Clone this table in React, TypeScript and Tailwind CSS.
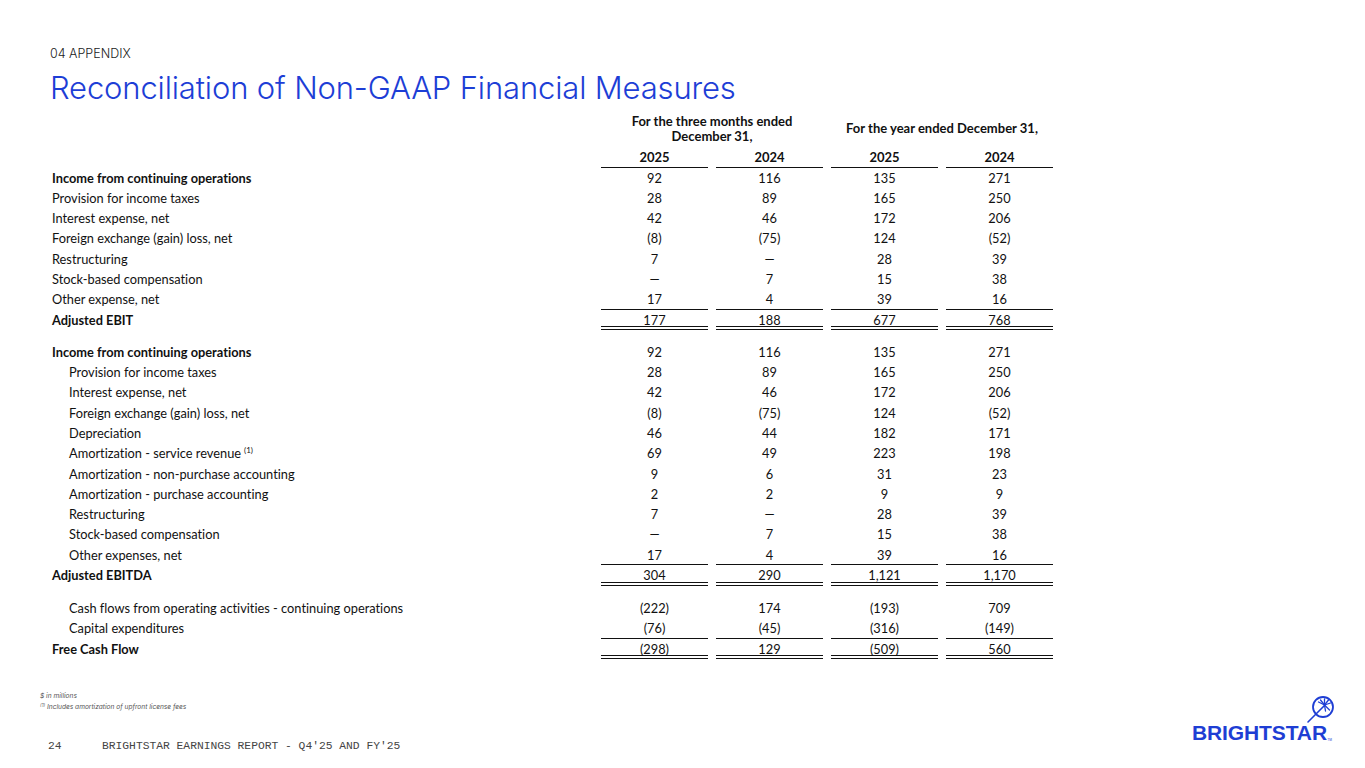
import React from 'react';

type Row = {
  label: string;
  values: string[];
  bold?: boolean;
  indent?: boolean;
  line?: 'single' | 'double';
  note?: string;
};

const section1: Row[] = [
  { label: 'Income from continuing operations', values: ['92', '116', '135', '271'], bold: true },
  { label: 'Provision for income taxes', values: ['28', '89', '165', '250'] },
  { label: 'Interest expense, net', values: ['42', '46', '172', '206'] },
  { label: 'Foreign exchange (gain) loss, net', values: ['(8)', '(75)', '124', '(52)'] },
  { label: 'Restructuring', values: ['7', '—', '28', '39'] },
  { label: 'Stock-based compensation', values: ['—', '7', '15', '38'] },
  { label: 'Other expense, net', values: ['17', '4', '39', '16'], line: 'single' },
  { label: 'Adjusted EBIT', values: ['177', '188', '677', '768'], bold: true, line: 'double' },
];

const section2: Row[] = [
  { label: 'Income from continuing operations', values: ['92', '116', '135', '271'], bold: true },
  { label: 'Provision for income taxes', values: ['28', '89', '165', '250'], indent: true },
  { label: 'Interest expense, net', values: ['42', '46', '172', '206'], indent: true },
  { label: 'Foreign exchange (gain) loss, net', values: ['(8)', '(75)', '124', '(52)'], indent: true },
  { label: 'Depreciation', values: ['46', '44', '182', '171'], indent: true },
  { label: 'Amortization - service revenue', values: ['69', '49', '223', '198'], indent: true, note: '(1)' },
  { label: 'Amortization - non-purchase accounting', values: ['9', '6', '31', '23'], indent: true },
  { label: 'Amortization - purchase accounting', values: ['2', '2', '9', '9'], indent: true },
  { label: 'Restructuring', values: ['7', '—', '28', '39'], indent: true },
  { label: 'Stock-based compensation', values: ['—', '7', '15', '38'], indent: true },
  { label: 'Other expenses, net', values: ['17', '4', '39', '16'], indent: true, line: 'single' },
  { label: 'Adjusted EBITDA', values: ['304', '290', '1,121', '1,170'], bold: true, line: 'double' },
];

const section3: Row[] = [
  { label: 'Cash flows from operating activities - continuing operations', values: ['(222)', '174', '(193)', '709'], indent: true },
  { label: 'Capital expenditures', values: ['(76)', '(45)', '(316)', '(149)'], indent: true, line: 'single' },
  { label: 'Free Cash Flow', values: ['(298)', '129', '(509)', '560'], bold: true, line: 'double' },
];

const gridCols = 'grid grid-cols-[541px_107px_107px_107px_107px] gap-x-[8px]';

// rules drawn as inset shadows so they don't push the numbers off-centre
const singleRule = 'shadow-[inset_0_-1px_0_#111]';
const doubleRule = 'shadow-[inset_0_-1px_0_#111,inset_0_-3px_0_#fff,inset_0_-4px_0_#111]';

function TableRow({ row }: { row: Row }) {
  const lineClass = row.line === 'single' ? singleRule : row.line === 'double' ? doubleRule : '';
  return (
    <div className={`${gridCols} h-[20.3px]`}>
      <div className={`flex items-center ${row.indent ? 'pl-[17px]' : ''} ${row.bold ? 'font-bold' : ''}`}>
        {row.label}
        {row.note && <sup className="ml-[3px] text-[8px] top-[-4px]">{row.note}</sup>}
      </div>
      {row.values.map((v, i) => (
        <div key={i} className={`flex items-center justify-center ${lineClass}`}>
          {v}
        </div>
      ))}
    </div>
  );
}

function Logo() {
  return (
    <div className="relative pr-[7px] mb-[10px]">
      <div className="font-['Liberation_Sans',sans-serif] font-bold text-[21px] leading-none tracking-[-0.1px] text-[#1e3ed4]">
        BRIGHTSTAR
      </div>
      <span className="absolute right-[2px] bottom-[1px] text-[3px] leading-none text-[#1e3ed4]">TM</span>
      <svg className="absolute right-[-1px] top-[-27px]" width="36" height="34" viewBox="0 0 36 34" fill="none">
        <circle cx="24" cy="12" r="10" stroke="#1e3ed4" strokeWidth="1.8" />
        <line x1="9" y1="27" x2="25" y2="11" stroke="#1e3ed4" strokeWidth="1.6" strokeLinecap="round" />
        <g stroke="#1e3ed4" strokeWidth="1.3" strokeLinecap="round">
          <line x1="25.5" y1="10" x2="25.5" y2="4" />
          <line x1="25.5" y1="10" x2="31.5" y2="8" />
          <line x1="25.5" y1="10" x2="30.5" y2="15" />
          <line x1="25.5" y1="10" x2="19.5" y2="7" />
          <line x1="25.5" y1="10" x2="29.5" y2="5" />
          <line x1="25.5" y1="10" x2="26.5" y2="16" />
          <line x1="25.5" y1="10" x2="21.5" y2="5" />
        </g>
      </svg>
    </div>
  );
}

export default function App() {
  return (
    <div className="w-[1365px] h-[768px] bg-white relative overflow-hidden flex flex-col">
      {/* Heading */}
      <div className="pl-[50px] pt-[46px] font-['Inter',sans-serif]">
        <div className="text-[12.5px] font-light text-[#222] leading-[16px]">04 APPENDIX</div>
        <h1 className="mt-[8px] text-[31px] font-light text-[#1d3ed6] leading-[36px] tracking-[-0.15px]">
          Reconciliation of Non-GAAP Financial Measures
        </h1>
      </div>

      {/* Table */}
      <div className="pl-[52px] mt-[5px] font-['Lato',sans-serif] text-[12.8px] text-[#111] [font-variant-ligatures:none]">
        <div className={`${gridCols} h-[36px] font-bold text-[13px]`}>
          <div />
          <div className="col-span-2 flex items-center justify-center text-center leading-[15px]">
            <span className="w-[200px]">For the three months ended December 31,</span>
          </div>
          <div className="col-span-2 flex items-center justify-center text-center">
            For the year ended December 31,
          </div>
        </div>
        <div className={`${gridCols} h-[21px] font-bold text-[13px]`}>
          <div />
          {['2025', '2024', '2025', '2024'].map((y, i) => (
            <div key={i} className={`flex items-center justify-center ${singleRule}`}>
              {y}
            </div>
          ))}
        </div>
        {section1.map((r, i) => (
          <TableRow key={'a' + i} row={r} />
        ))}
        <div className="h-[11.8px]" />
        {section2.map((r, i) => (
          <TableRow key={'b' + i} row={r} />
        ))}
        <div className="h-[12.8px]" />
        {section3.map((r, i) => (
          <TableRow key={'c' + i} row={r} />
        ))}
      </div>

      {/* Footer */}
      <div className="mt-auto flex items-end justify-between pr-[31px] pb-[15px]">
        <div className="flex flex-col">
          <div className="pl-[40px] font-['Inter',sans-serif] italic text-[6.6px] text-[#555] leading-[11px]">
            <div>$ in millions</div>
            <div>
              <sup className="text-[4.5px]">(1)</sup> Includes amortization of upfront license fees
            </div>
          </div>
          <div className="mt-[26px] pl-[48px] flex font-['Liberation_Mono',monospace] text-[11.3px] text-[#444] leading-[14px]">
            <span className="w-[54px]">24</span>
            <span>BRIGHTSTAR EARNINGS REPORT - Q4'25 AND FY'25</span>
          </div>
        </div>
        <Logo />
      </div>
    </div>
  );
}
